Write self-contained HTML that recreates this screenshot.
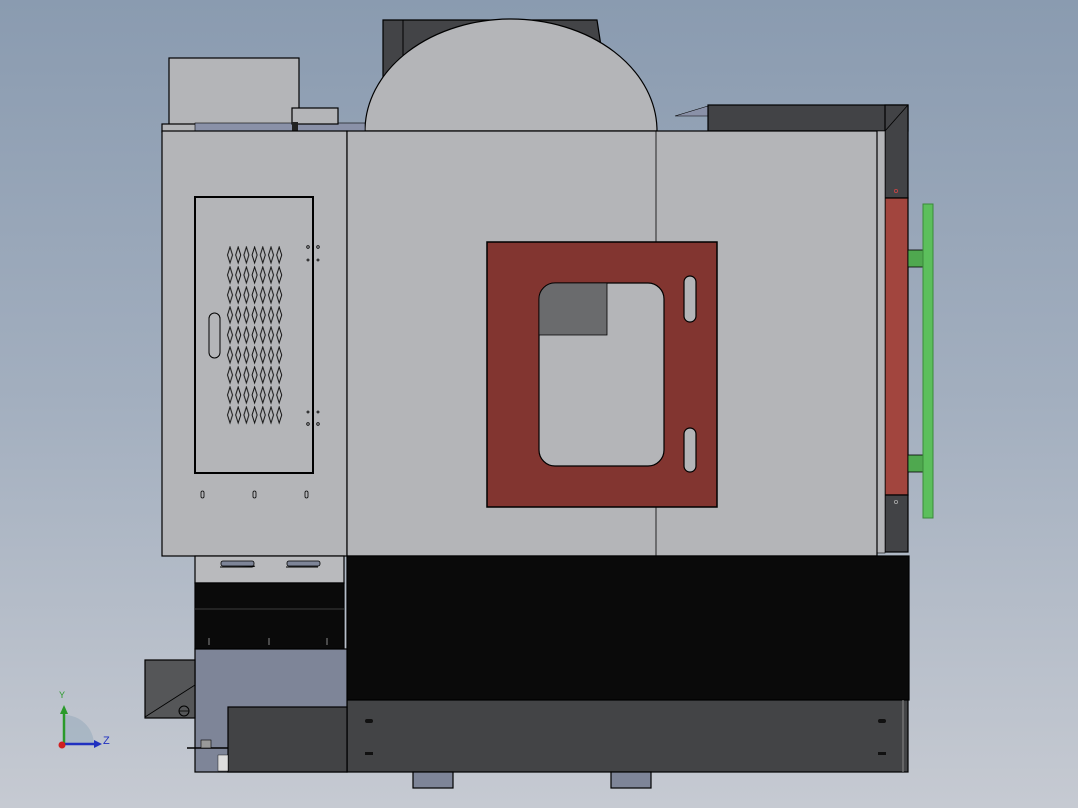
<!DOCTYPE html>
<html><head><meta charset="utf-8"><style>
html,body{margin:0;padding:0;width:1078px;height:808px;overflow:hidden}
body{background:linear-gradient(#8a9bb0 0%,#a3afbf 50%,#c6cad2 100%)}
svg{position:absolute;left:0;top:0}
</style></head><body>
<svg width="1078" height="808" viewBox="0 0 1078 808" xmlns="http://www.w3.org/2000/svg">
<defs>
<pattern id="vent" x="226" y="246" width="8.2" height="20" patternUnits="userSpaceOnUse">
<path d="M4,1 L6.5,9 L4,17 L1.5,9 Z" fill="none" stroke="#111" stroke-width="1"/>
</pattern>
</defs>
<g stroke="#000" stroke-width="1.2">
<!-- behind dome dark -->
<polygon points="383,20 597,20 601,46 520,100 383,100" fill="#434447"/>
<line x1="403" y1="20" x2="403" y2="90" stroke-width="1"/>
<!-- dome -->
<path d="M365,131 A146,112 0 0 1 657,131 Z" fill="#b4b5b8"/>
<!-- top-left box -->
<rect x="169" y="58" width="130" height="73" fill="#b4b5b8"/>
<rect x="162" y="124" width="34" height="8" fill="#b4b5b8"/>
<rect x="195" y="123" width="170" height="8" fill="#8a91a8" stroke-width="0.6"/>
<rect x="292" y="108" width="46" height="16" fill="#b4b5b8"/>
<rect x="292" y="122" width="6" height="9" fill="#222" stroke="none"/>
<!-- right dark L -->
<polygon points="675,116 708,106 708,116" fill="#8a91a8" stroke-width="0.6"/>
<rect x="708" y="105" width="200" height="26" fill="#424346"/>
<rect x="885" y="105" width="23" height="93" fill="#424346"/>
<line x1="885" y1="131" x2="908" y2="105" stroke-width="0.8"/>
<rect x="885" y="198" width="23" height="297" fill="#a2453e"/>
<rect x="885" y="495" width="23" height="57" fill="#424346"/>
<circle cx="896" cy="191" r="1.6" fill="none" stroke="#c44" stroke-width="0.8"/>
<circle cx="896" cy="502" r="1.6" fill="none" stroke="#aaa" stroke-width="0.8"/>
<rect x="877" y="131" width="8" height="422" fill="#b4b5b8" stroke-width="0.6"/>
<!-- green bar -->
<rect x="908" y="250" width="17" height="17" fill="#4fa84f" stroke-width="0.8"/>
<rect x="908" y="455" width="17" height="17" fill="#4fa84f" stroke-width="0.8"/>
<rect x="923" y="204" width="10" height="314" fill="#5cbf5c" stroke="#3a8a3a" stroke-width="1"/>
<!-- left cabinet -->
<rect x="162" y="131" width="185" height="425" fill="#b4b5b8"/>
<rect x="195" y="197" width="118" height="276" fill="#b4b5b8" stroke-width="2"/>
<rect x="226" y="246" width="57" height="180" fill="url(#vent)" stroke="none"/>
<rect x="209" y="313" width="11" height="45" rx="5.5" fill="none" stroke-width="1"/>
<g fill="none" stroke-width="0.8">
<circle cx="308" cy="247" r="1.3"/><circle cx="318" cy="247" r="1.3"/>
<circle cx="308" cy="260" r="1"/><circle cx="318" cy="260" r="1"/>
<circle cx="308" cy="412" r="1"/><circle cx="318" cy="412" r="1"/>
<circle cx="308" cy="424" r="1.3"/><circle cx="318" cy="424" r="1.3"/>
<circle cx="482" cy="292" r="1.3"/><circle cx="490" cy="292" r="1.3"/>
<circle cx="482" cy="305" r="1.3"/><circle cx="490" cy="305" r="1.3"/>
<circle cx="482" cy="443" r="1.3"/><circle cx="490" cy="443" r="1.3"/>
<circle cx="482" cy="456" r="1"/><circle cx="490" cy="456" r="1"/>
<rect x="201" y="491" width="3" height="7" rx="1.5"/>
<rect x="253" y="491" width="3" height="7" rx="1.5"/>
<rect x="305" y="491" width="3" height="7" rx="1.5"/>
</g>
<!-- main panel -->
<rect x="347" y="131" width="530" height="425" fill="#b4b5b8"/>
<line x1="656" y1="131" x2="656" y2="556" stroke-width="0.8"/>
<!-- red window panel -->
<rect x="487" y="242" width="230" height="265" fill="#823530" stroke-width="1.5"/>
<rect x="539" y="283" width="125" height="183" rx="16" fill="#b4b5b8"/>
<path d="M555,283 L607,283 L607,335 L539,335 L539,299 A16,16 0 0 1 555,283 Z" fill="#6a6b6d" stroke-width="0.8"/>
<rect x="684" y="276" width="12" height="46" rx="6" fill="#b4b5b8"/>
<rect x="684" y="428" width="12" height="44" rx="6" fill="#b4b5b8"/>
<!-- black section -->
<rect x="347" y="556" width="562" height="144" fill="#0a0a0a"/>
<rect x="347" y="700" width="561" height="72" fill="#434446"/>
<line x1="903" y1="700" x2="903" y2="772" stroke="#888" stroke-width="1"/>
<g fill="#111" stroke="none">
<rect x="365" y="719" width="8" height="4" rx="2"/><rect x="365" y="752" width="8" height="3"/>
<rect x="878" y="719" width="8" height="4" rx="2"/><rect x="878" y="752" width="8" height="3"/>
</g>
<!-- left lower -->
<rect x="195" y="556" width="149" height="27" fill="#b9babd"/>
<path d="M220,567 L252,567 L255,566 M286,567 L318,567" stroke-width="1"/>
<rect x="221" y="561" width="33" height="5" rx="2" fill="#7e8598" stroke-width="0.8"/>
<rect x="287" y="561" width="33" height="5" rx="2" fill="#7e8598" stroke-width="0.8"/>
<rect x="195" y="583" width="149" height="66" fill="#0a0a0a"/>
<line x1="195" y1="609" x2="344" y2="609" stroke="#333"/>
<g stroke="#888" stroke-width="1"><line x1="209" y1="638" x2="209" y2="645"/><line x1="269" y1="638" x2="269" y2="645"/><line x1="327" y1="638" x2="327" y2="645"/></g>
<rect x="195" y="649" width="152" height="123" fill="#7e8598"/>
<rect x="228" y="707" width="119" height="65" fill="#424345"/>
<rect x="145" y="660" width="50" height="58" fill="#555658"/>
<line x1="145" y1="717" x2="195" y2="685" stroke-width="0.8"/>
<circle cx="184" cy="711" r="5" fill="none" stroke-width="1"/>
<line x1="179" y1="711" x2="189" y2="711" stroke-width="0.8"/>
<line x1="187" y1="748" x2="228" y2="748" stroke-width="1.5"/>
<rect x="201" y="740" width="10" height="8" fill="#999" stroke-width="0.6"/>
<rect x="218" y="755" width="10" height="16" fill="#ddd" stroke-width="0.4"/>
<!-- feet -->
<rect x="413" y="772" width="40" height="16" fill="#7e8598"/>
<rect x="611" y="772" width="40" height="16" fill="#7e8598"/>
</g>
<!-- axis triad -->
<path d="M64,744 L64,715 A30,30 0 0 1 94,744 Z" fill="#9fb0c0" opacity="0.7"/>
<line x1="64" y1="744" x2="64" y2="712" stroke="#2a9a2a" stroke-width="2.5"/>
<polygon points="60,714 68,714 64,705" fill="#2a9a2a"/>
<line x1="64" y1="744" x2="96" y2="744" stroke="#2030c0" stroke-width="2.5"/>
<polygon points="94,740 94,748 102,744" fill="#2030c0"/>
<circle cx="62" cy="745" r="3.5" fill="#d02020"/>
<text x="59" y="698" font-family="Liberation Sans, sans-serif" font-size="9" fill="#2a9a2a">Y</text>
<text x="103" y="744" font-family="Liberation Sans, sans-serif" font-size="11" fill="#2030c0">Z</text>
</svg>
</body></html>
